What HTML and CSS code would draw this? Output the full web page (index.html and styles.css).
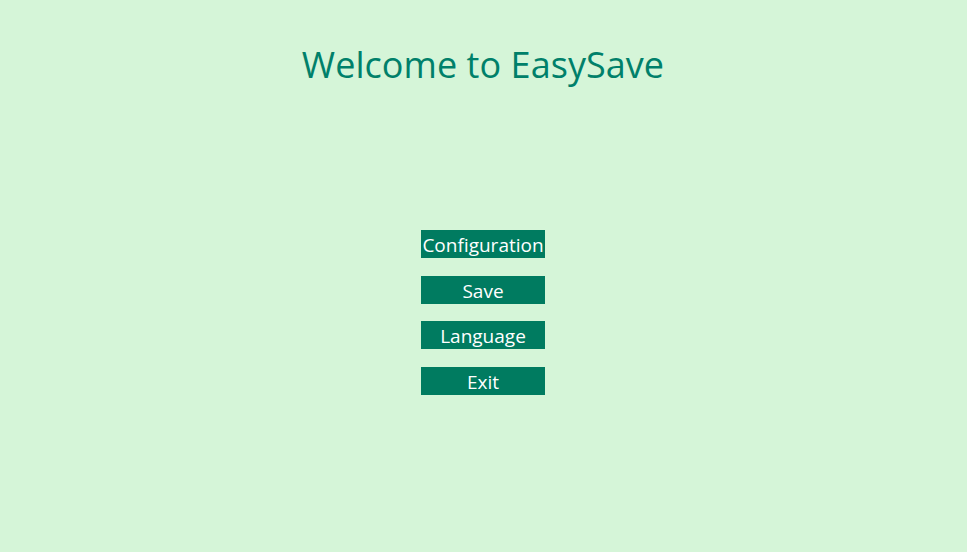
FILE: index.html
```html
<!DOCTYPE html>
<html>
<head>
<meta charset="utf-8">
<link rel="stylesheet" href="styles.css">
</head>
<body>
<div class="app">
  <h1 class="title">Welcome to EasySave</h1>
  <div class="menu">
    <button class="btn">Configuration</button>
    <button class="btn">Save</button>
    <button class="btn">Language</button>
    <button class="btn">Exit</button>
  </div>
</div>
</body>
</html>
```
FILE: styles.css
```css
html, body {
  margin: 0;
  padding: 0;
  height: 100%;
}
body {
  background: #d5f5d8;
  font-family: "Open Sans", "Noto Sans", sans-serif;
}
.app {
  display: flex;
  flex-direction: column;
  align-items: center;
  height: 552px;
  padding-right: 1px;
}
.title {
  margin: 38px 0 0 0;
  font-weight: 400;
  font-size: 36px;
  line-height: 54px;
  color: #00806a;
  letter-spacing: 0.05px;
}
.menu {
  margin-top: 138px;
  display: flex;
  flex-direction: column;
  gap: 17.5px;
}
.btn {
  width: 124px;
  height: 28px;
  border: none;
  padding: 3px 0 0 0;
  margin: 0;
  background: #007b60;
  color: #ffffff;
  font-family: "Open Sans", "Noto Sans", sans-serif;
  font-size: 19px;
  line-height: 25px;
  letter-spacing: 0;
  white-space: nowrap;
  overflow: visible;
}
```
